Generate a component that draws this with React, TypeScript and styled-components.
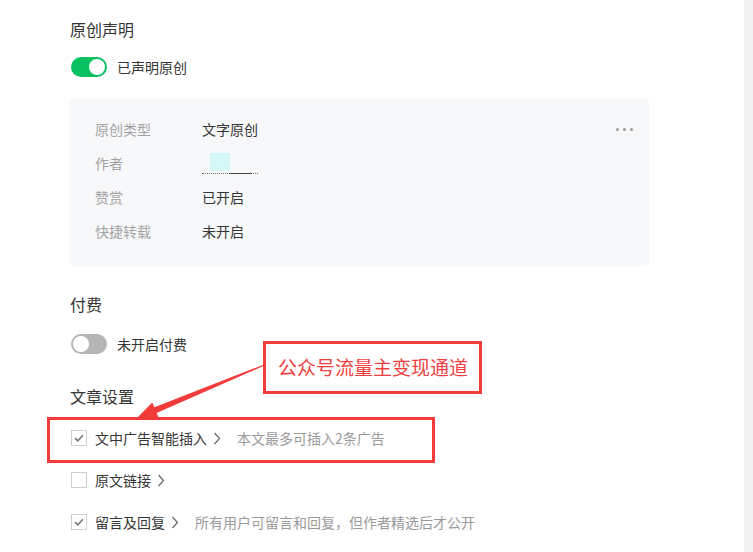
import React from "react";
import styled, { createGlobalStyle } from "styled-components";

const Global = createGlobalStyle`
  html, body { margin: 0; padding: 0; background: #fff; }
  body { font-family: "Noto Sans CJK SC", "Noto Sans", "Liberation Sans", sans-serif; color: #353535; }
`;

const Page = styled.div`
  position: relative;
  display: flex;
  width: 753px;
  height: 552px;
  overflow: hidden;
  background: #fff;
`;

const Main = styled.div`
  flex: 1;
  padding: 19px 0 0 70px;
`;

const ScrollTrack = styled.div`
  width: 9px;
  background: #f2f2f2;
`;

const SectionTitle = styled.div<{ $top: number }>`
  margin-top: ${(p) => p.$top}px;
  font-size: 16px;
  line-height: 20px;
  height: 20px;
  color: #353535;
`;

const SwitchRow = styled.div<{ $top: number }>`
  display: flex;
  align-items: center;
  margin-top: ${(p) => p.$top}px;
  height: 20px;
  padding-left: 1px;
`;

const Switch = styled.div<{ $on?: boolean }>`
  position: relative;
  width: 36px;
  height: 20px;
  border-radius: 10px;
  background: ${(p) => (p.$on ? "#07c160" : "#b5b5b5")};
  &::after {
    content: "";
    position: absolute;
    top: 2px;
    left: ${(p) => (p.$on ? "18px" : "2px")};
    width: 16px;
    height: 16px;
    border-radius: 50%;
    background: #fff;
  }
`;

const SwitchLabel = styled.span`
  margin-left: 10px;
  font-size: 14px;
  line-height: 20px;
  color: #353535;
`;

const Panel = styled.div`
  position: relative;
  margin-top: 22px;
  width: 579px;
  box-sizing: border-box;
  padding: 13px 0 18px 25px;
  background: #f7f8fa;
  border-radius: 2px;
`;

const InfoRow = styled.div`
  display: flex;
  align-items: center;
  height: 34px;
  font-size: 14px;
`;

const InfoLabel = styled.span`
  width: 107px;
  color: #a3a3a3;
`;

const InfoValue = styled.span`
  color: #353535;
`;

const MoreDots = styled.div`
  position: absolute;
  top: 29px;
  right: 16px;
  display: flex;
  gap: 4px;
  & > i {
    width: 3px;
    height: 3px;
    border-radius: 50%;
    background: #9a9a9a;
  }
`;

const AuthorMask = styled.div`
  position: relative;
  width: 56px;
  height: 20px;
  margin-top: 1px;
  border-bottom: 1px dotted #6a6a6a;
  &::after {
    content: "";
    position: absolute;
    left: 28px;
    bottom: -1px;
    width: 22px;
    border-bottom: 1px solid #444;
  }
`;

const CyanBlock = styled.div`
  margin-left: 8px;
  width: 20px;
  height: 18px;
  background: #d5f6f7;
`;

const CheckRow = styled.div<{ $first?: boolean }>`
  display: flex;
  align-items: center;
  height: 42px;
  margin-top: ${(p) => (p.$first ? "11px" : "0")};
  font-size: 14px;
  padding-left: 1px;
`;

const CheckBox = styled.div`
  width: 14px;
  height: 14px;
  border: 1px solid #cfcfcf;
  background: #fff;
  display: flex;
  align-items: center;
  justify-content: center;
`;

const CheckLabel = styled.span`
  margin-left: 8px;
  color: #353535;
`;

const Chevron = styled.svg`
  margin-left: 6px;
  width: 8px;
  height: 13px;
`;

const Desc = styled.span`
  margin-left: 16px;
  color: #9a9a9a;
`;

const Callout = styled.div`
  position: absolute;
  left: 263px;
  top: 341px;
  width: 219px;
  height: 53px;
  box-sizing: border-box;
  border: 3px solid #f23c3c;
  background: #fff;
  display: flex;
  align-items: center;
  justify-content: center;
  font-size: 19px;
  color: #f03f3f;
  padding: 0 0 2px 1px;
`;

const HighlightBox = styled.div`
  position: absolute;
  left: 47px;
  top: 417px;
  width: 388px;
  height: 46px;
  box-sizing: border-box;
  border: 3px solid #f23c3c;
  pointer-events: none;
`;

const ArrowSvg = styled.svg`
  position: absolute;
  left: 0;
  top: 0;
  width: 753px;
  height: 552px;
  pointer-events: none;
`;

const Check = () => (
  <svg width="10" height="8" viewBox="0 0 10 8">
    <path d="M1 4.2 L3.8 6.8 L9 1.2" fill="none" stroke="#777" strokeWidth="1.6" />
  </svg>
);

const Arrow = () => (
  <Chevron viewBox="0 0 8 13">
    <path d="M1.5 1 L6.5 6.5 L1.5 12" fill="none" stroke="#666" strokeWidth="1.2" />
  </Chevron>
);

export default function App() {
  return (
    <>
      <Global />
      <Page>
        <Main>
          <SectionTitle $top={0}>原创声明</SectionTitle>
          <SwitchRow $top={18}>
            <Switch $on />
            <SwitchLabel>已声明原创</SwitchLabel>
          </SwitchRow>
          <Panel>
            <MoreDots>
              <i />
              <i />
              <i />
            </MoreDots>
            <InfoRow>
              <InfoLabel>原创类型</InfoLabel>
              <InfoValue>文字原创</InfoValue>
            </InfoRow>
            <InfoRow>
              <InfoLabel>作者</InfoLabel>
              <AuthorMask>
                <CyanBlock />
              </AuthorMask>
            </InfoRow>
            <InfoRow>
              <InfoLabel>赞赏</InfoLabel>
              <InfoValue>已开启</InfoValue>
            </InfoRow>
            <InfoRow>
              <InfoLabel>快捷转载</InfoLabel>
              <InfoValue>未开启</InfoValue>
            </InfoRow>
          </Panel>
          <SectionTitle $top={28}>付费</SectionTitle>
          <SwitchRow $top={20}>
            <Switch />
            <SwitchLabel>未开启付费</SwitchLabel>
          </SwitchRow>
          <SectionTitle $top={32}>文章设置</SectionTitle>
          <CheckRow $first>
            <CheckBox>
              <Check />
            </CheckBox>
            <CheckLabel>文中广告智能插入</CheckLabel>
            <Arrow />
            <Desc>本文最多可插入2条广告</Desc>
          </CheckRow>
          <CheckRow>
            <CheckBox />
            <CheckLabel>原文链接</CheckLabel>
            <Arrow />
          </CheckRow>
          <CheckRow>
            <CheckBox>
              <Check />
            </CheckBox>
            <CheckLabel>留言及回复</CheckLabel>
            <Arrow />
            <Desc>所有用户可留言和回复，但作者精选后才公开</Desc>
          </CheckRow>
        </Main>
        <ScrollTrack />
        <ArrowSvg viewBox="0 0 753 552">
          <polygon
            points="137,418 152.3,402.5 154.4,407.2 264,364.5 264.4,365.6 156.6,413 158.8,418"
            fill="#f23c3c"
          />
        </ArrowSvg>
        <Callout>公众号流量主变现通道</Callout>
        <HighlightBox />
      </Page>
    </>
  );
}
